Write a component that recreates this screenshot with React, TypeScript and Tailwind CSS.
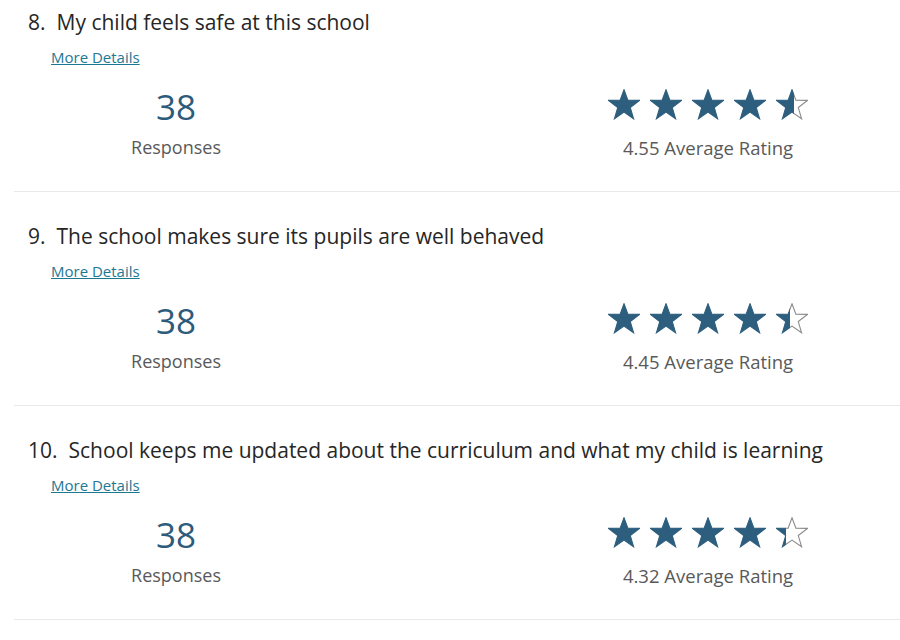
import React from "react";

type Question = {
  num: number;
  text: string;
  responses: number;
  rating: number;
};

const QUESTIONS: Question[] = [
  { num: 8, text: "My child feels safe at this school", responses: 38, rating: 4.55 },
  { num: 9, text: "The school makes sure its pupils are well behaved", responses: 38, rating: 4.45 },
  {
    num: 10,
    text: "School keeps me updated about the curriculum and what my child is learning",
    responses: 38,
    rating: 4.32,
  },
];

const STAR_PTS =
  "16,0.8 19.88,11.16 31.4,11.4 22.28,18.54 25.6,29.8 16,23.1 6.4,29.8 9.72,18.54 0.6,11.4 12.12,11.16";

function Star({ fill, id }: { fill: number; id: string }) {
  // fill: 0..1, portion of the star painted from the left
  const pct = `${Math.round(fill * 100)}%`;
  return (
    <svg width="32" height="31" viewBox="0 0 32 31" className="block">
      <defs>
        <linearGradient id={`f-${id}`} x1="0" x2="1" y1="0" y2="0">
          <stop offset={pct} stopColor="#2d5e7e" />
          <stop offset={pct} stopColor="#ffffff" />
        </linearGradient>
        <linearGradient id={`s-${id}`} x1="0" x2="1" y1="0" y2="0">
          <stop offset={pct} stopColor="#2d5e7e" />
          <stop offset={pct} stopColor="#8a8a8a" />
        </linearGradient>
      </defs>
      <polygon
        points={STAR_PTS}
        fill={`url(#f-${id})`}
        stroke={fill >= 1 ? "#2d5e7e" : `url(#s-${id})`}
        strokeWidth="1.1"
        strokeLinejoin="miter"
      />
    </svg>
  );
}

function Stars({ rating, qid }: { rating: number; qid: number }) {
  return (
    <div className="flex justify-center gap-[10px]">
      {[0, 1, 2, 3, 4].map((i) => {
        const f = Math.max(0, Math.min(1, rating - i));
        return <Star key={i} fill={f} id={`${qid}-${i}`} />;
      })}
    </div>
  );
}

function QuestionBlock({ q }: { q: Question }) {
  return (
    <section className="box-border h-[214px] border-b border-[#e9e9e9]">
      <h2 className="flex pl-[14px] pt-[30px] text-[21px] font-normal leading-[28px] text-[#262626]">
        <span className="mr-[11px]">{q.num}.</span>
        <span>{q.text}</span>
      </h2>
      <a
        href="#"
        className="mt-[11px] ml-[37px] block w-fit text-[15px] leading-[20px] text-[#1d7894] underline"
      >
        More Details
      </a>
      <div className="mt-[20px] flex">
        <div className="w-[324px] text-center">
          <div className="text-[35px] leading-[40px] text-[#2d5b7b]">{q.responses}</div>
          <div className="mt-[8px] text-[18px] leading-[24px] text-[#595959]">Responses</div>
        </div>
        <div className="ml-[240px] w-[260px] text-center">
          <div className="mt-[2px]">
            <Stars rating={q.rating} qid={q.num} />
          </div>
          <div className="mt-[16px] text-[18.5px] leading-[24px] text-[#595959]">
            {q.rating.toFixed(2)} Average Rating
          </div>
        </div>
      </div>
    </section>
  );
}

export default function App() {
  return (
    <div className="h-[640px] w-[900px] overflow-hidden bg-white font-['Open_Sans','Noto_Sans',sans-serif]">
      <div className="-mt-[22px] pl-[14px]">
        {QUESTIONS.map((q) => (
          <QuestionBlock key={q.num} q={q} />
        ))}
      </div>
    </div>
  );
}
